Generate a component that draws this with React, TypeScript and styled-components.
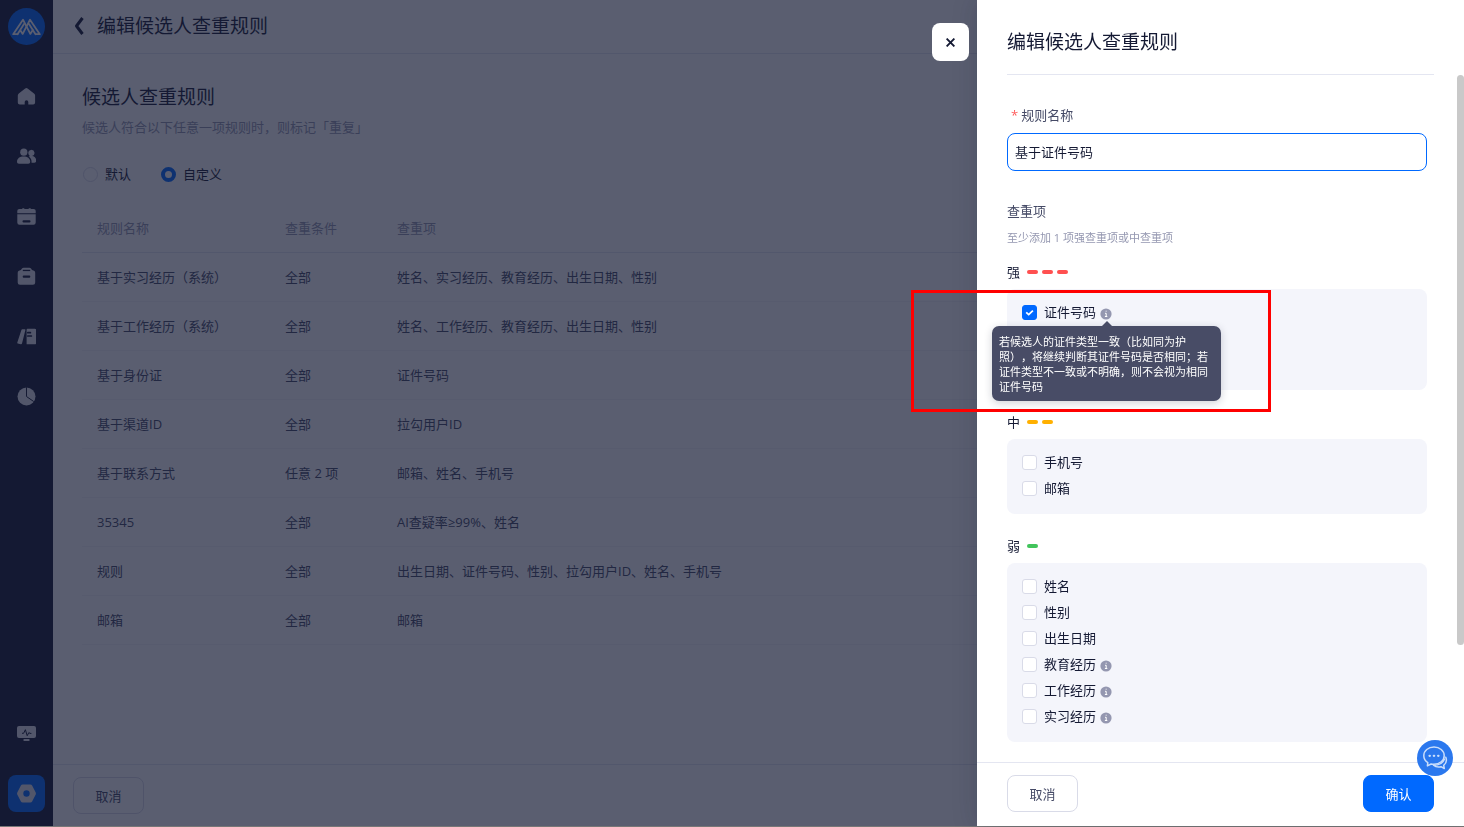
import React, { useState } from "react";
import styled, { createGlobalStyle, css } from "styled-components";

const color = {
  ink: "#141933",
  text: "#454a66",
  muted: "#9497b0",
  line: "#e4e6f1",
  border: "#d9dbe8",
  blue: "#0069ff",
  panel: "#f4f5fb",
  tip: "#484c66",
};

const GlobalStyle = createGlobalStyle`
  *, *::before, *::after { box-sizing: border-box; }
  body {
    margin: 0;
    overflow: hidden;
    font-family: "Open Sans", "Noto Sans CJK SC", sans-serif;
    font-size: 13px;
    line-height: 20px;
    color: ${color.ink};
    text-spacing-trim: space-all;
  }
  button, input { font: inherit; color: inherit; margin: 0; }
  button { cursor: pointer; }
  h1, h2, h3, p { margin: 0; font-weight: 400; }
`;

const Shell = styled.div`
  display: flex;
  height: 100vh;
  background: #fff;
  border-bottom: 1px solid #777;
`;

/* ---------- side navigation ---------- */

const Sidebar = styled.nav`
  display: flex;
  flex-direction: column;
  flex: none;
  width: 53px;
  padding: 8px 0 3px;
  background: ${color.ink};
`;

const Logo = styled.a`
  display: grid;
  place-items: center;
  width: 37px;
  height: 37px;
  margin: 0 auto 21px;
  border-radius: 50%;
  background: ${color.blue};
`;

const NavItem = styled.a`
  display: grid;
  place-items: center;
  height: 60px;
  color: #e4e5ec;
`;

const NavSpacer = styled.div`
  flex: 1;
`;

const NavActive = styled.span`
  display: grid;
  place-items: center;
  width: 37px;
  height: 37px;
  border-radius: 8px;
  background: ${color.blue};
`;

/* ---------- page ---------- */

const Main = styled.main`
  display: flex;
  flex: 1;
  flex-direction: column;
  min-width: 0;
`;

const PageHeader = styled.header`
  display: flex;
  align-items: center;
  gap: 10px;
  flex: none;
  height: 54px;
  padding: 0 20px 2px;
  border-bottom: 1px solid ${color.line};
`;

const BackButton = styled.button`
  display: grid;
  place-items: center;
  width: 14px;
  height: 24px;
  padding: 0;
  border: 0;
  background: none;
`;

const Title = styled.h1`
  font-size: 19px;
  line-height: 28px;
`;

const Content = styled.section`
  flex: 1;
  min-height: 0;
  overflow: hidden;
  padding: 29px 30px 0 29px;
`;

const SubTitle = styled.h2`
  font-size: 19px;
  line-height: 28px;
`;

const Hint = styled.p`
  margin-top: 6px;
  color: ${color.muted};
`;

const RadioGroup = styled.div`
  display: flex;
  gap: 30px;
  margin: 27px 0 21px;
  padding-left: 1px;
`;

const RadioLabel = styled.label`
  display: flex;
  align-items: center;
  gap: 7px;
`;

const Radio = styled.input.attrs({ type: "radio" })`
  appearance: none;
  width: 15px;
  height: 15px;
  border: 1px solid ${color.border};
  border-radius: 50%;
  background: #fff;
  &:checked {
    border: 4px solid ${color.blue};
  }
`;

const Table = styled.table`
  width: 100%;
  table-layout: fixed;
  border-collapse: separate;
  border-spacing: 0;
`;

const cell = css`
  padding: 0 0 1px 15px;
  text-align: left;
  font-weight: 400;
`;

const Th = styled.th<{ $w?: number }>`
  ${cell}
  width: ${(p) => (p.$w ? `${p.$w}px` : "auto")};
  height: 48px;
  color: ${color.muted};
  border-bottom: 1px solid ${color.line};
`;

const Td = styled.td`
  ${cell}
  height: 49px;
  color: ${color.text};
  border-bottom: 1px solid #f3f4f9;
`;

const PageFooter = styled.footer`
  flex: none;
  padding: 12px 20px;
  border-top: 1px solid ${color.line};
`;

const Button = styled.button<{ $primary?: boolean }>`
  width: 71px;
  height: 37px;
  padding: 0;
  border: 1px solid ${(p) => (p.$primary ? color.blue : color.border)};
  border-radius: 8px;
  background: ${(p) => (p.$primary ? color.blue : "#fff")};
  color: ${(p) => (p.$primary ? "#fff" : color.text)};
`;

/* ---------- drawer ---------- */

const Mask = styled.div`
  position: fixed;
  inset: 0 0 1px;
  background: rgba(20, 26, 51, 0.7);
`;

const Drawer = styled.aside`
  position: fixed;
  inset: 0 0 1px auto;
  display: flex;
  flex-direction: column;
  width: 487px;
  max-width: 100vw;
  background: #fff;
  box-shadow: 0 0 24px rgba(20, 25, 51, 0.2);
`;

const CloseButton = styled.button`
  position: absolute;
  top: 23px;
  left: -45px;
  display: grid;
  place-items: center;
  width: 37px;
  height: 38px;
  padding: 0;
  border: 0;
  border-radius: 8px;
  background: #fff;
`;

const DrawerHeader = styled.header`
  flex: none;
  margin: 0 30px;
  padding: 28px 0 18px;
  border-bottom: 1px solid ${color.line};
`;

const DrawerBody = styled.div`
  position: relative;
  flex: 1;
  min-height: 0;
  overflow: hidden;
  padding: 30px 37px 0 30px;
`;

const ScrollThumb = styled.div`
  position: absolute;
  top: 0;
  right: 0;
  width: 7px;
  height: 83%;
  border-radius: 4px;
  background: #c9c9c9;
`;

const FieldLabel = styled.label`
  display: flex;
  gap: 3px;
  padding-left: 4px;
  color: ${color.text};
`;

const Required = styled.span`
  color: #ff5c5c;
`;

const TextInput = styled.input`
  display: block;
  width: 100%;
  height: 38px;
  margin: 8px 0 30px;
  padding: 0 7px 2px;
  border: 1px solid ${color.blue};
  border-radius: 8px;
  outline: none;
`;

const GroupTitle = styled.h3`
  font-size: 13px;
  line-height: 20px;
  color: ${color.text};
`;

const GroupHint = styled.p`
  margin: 7px 0 14px;
  font-size: 11px;
  color: ${color.muted};
`;

const Level = styled.h3`
  display: flex;
  align-items: center;
  gap: 7px;
  margin-bottom: 7px;
  font-size: 13px;
  line-height: 20px;
`;

const Bars = styled.span`
  display: flex;
  gap: 4px;
`;

const Bar = styled.i<{ $color: string }>`
  width: 11px;
  height: 4px;
  border-radius: 2px;
  background: ${(p) => p.$color};
`;

const Panel = styled.div<{ $rows: number }>`
  min-height: ${(p) => p.$rows * 26 + 23}px;
  margin-bottom: 22px;
  padding: 10px 15px 13px;
  border-radius: 8px;
  background: ${color.panel};
`;

const Option = styled.div`
  display: flex;
  align-items: center;
  height: 26px;
`;

const OptionLabel = styled.label`
  position: relative;
  display: flex;
  align-items: center;
  gap: 7px;
`;

const Checkbox = styled.input.attrs({ type: "checkbox" })`
  appearance: none;
  width: 15px;
  height: 15px;
  border: 1px solid ${color.border};
  border-radius: 3px;
  background: #fff;
  &:checked {
    border-color: ${color.blue};
    background: ${color.blue};
  }
`;

const Tick = styled.svg`
  position: absolute;
  top: 3px;
  left: 0;
  pointer-events: none;
`;

const Info = styled.span`
  position: relative;
  display: block;
  height: 11px;
  margin: 3px 0 0 4px;
  svg {
    display: block;
  }
`;

const Tooltip = styled.div`
  position: absolute;
  z-index: 1;
  top: 18px;
  left: -108px;
  width: 229px;
  padding: 8px 7px 7px;
  border-radius: 7px;
  background: ${color.tip};
  box-shadow: 0 2px 8px rgba(20, 25, 51, 0.2);
  color: #fff;
  font-size: 11px;
  line-height: 15px;
  &::before {
    content: "";
    position: absolute;
    top: -5px;
    left: 110px;
    border: 5px solid transparent;
    border-top: 0;
    border-bottom-color: ${color.tip};
  }
`;

const DrawerFooter = styled.footer`
  display: flex;
  justify-content: space-between;
  flex: none;
  padding: 12px 30px 14px;
  border-top: 1px solid ${color.line};
`;

const ChatButton = styled.button`
  position: fixed;
  right: 11px;
  bottom: 51px;
  display: grid;
  place-items: center;
  width: 36px;
  height: 36px;
  padding: 0;
  border: 0;
  border-radius: 50%;
  background: #2b78ee;
`;

const Highlight = styled.div`
  position: fixed;
  top: 290px;
  right: 193px;
  width: 360px;
  height: 122px;
  border: 3px solid #f00;
  pointer-events: none;
`;

/* ---------- icons ---------- */

const dark = color.ink;

const Icon = ({ children }: { children: React.ReactNode }) => (
  <svg width="19" height="19" viewBox="0 0 19 19" fill="currentColor" aria-hidden="true">
    {children}
  </svg>
);

const HomeIcon = () => (
  <Icon>
    <path d="M8.2 1.4a2 2 0 0 1 2.4 0l6.4 5.2c.8.6 1.1 1.2 1.1 2v7a2 2 0 0 1-2 2h-4.800v-2.600a1.800 1.800 0 0 0-3.600 0v2.600H2.800a2 2 0 0 1-2-2v-7c0-.8.3-1.4 1-2z" />
  </Icon>
);

const PeopleIcon = () => (
  <Icon>
    <circle cx="6.8" cy="5.2" r="3.6" />
    <path d="M0 14.8c0-3.4 2.8-5.3 6.6-5.3s6.6 1.9 6.6 5.3c0 1.3-.7 1.9-2 1.9H2c-1.300 0-2-.6-2-1.900z" />
    <path d="M11.300 6a3.100 3.100 0 1 1 3.800 3c2.600.3 4.100 2.200 4.100 4.500 0 1.500-.7 2.200-2 2.200h-2.700c.3-2.700-.7-4.700-2.900-6.100 1-.1 1.100-.7.900-1-.8-.7-1.200-1.500-1.200-2.600z" />
  </Icon>
);

const CalendarIcon = () => (
  <Icon>
    <path d="M.3 4.600A2.200 2.200 0 0 1 2.500 2.100h2.800V1.200h2v.9h4.400v-.9h2v.9h2.800a2.200 2.200 0 0 1 2.200 2.500v1.600H.3z" />
    <path d="M.3 7.200h18.400v8.300a2.200 2.200 0 0 1-2.200 2.200h-14A2.200 2.200 0 0 1 .3 15.500z" />
    <rect x="5.500" y="13.200" width="8" height="2.200" rx="1" fill={dark} />
  </Icon>
);

const BagIcon = () => (
  <Icon>
    <path d="M5 1.600C5.400 1 6 .8 6.700.8h5.600c.7 0 1.300.2 1.700.8l1 1.400 2 .8c.8.4 1.200 1 1.200 1.900v9.700a2.300 2.300 0 0 1-2.300 2.300H3a2.300 2.300 0 0 1-2.300-2.300V5.700c0-.9.4-1.500 1.200-1.900l2-.8z" />
    <rect x="5.800" y="2.800" width="7.400" height="1.300" fill={dark} />
    <rect x="5.700" y="8.600" width="7.600" height="2.200" rx="1" fill={dark} />
  </Icon>
);

const BooksIcon = () => (
  <Icon>
    <path d="M5.300 2.200h2.500c.5 0 .7.300.6.800L5 16.500c-.2.600-.6.800-1.200.7L.8 16.500c-.5-.1-.7-.4-.5-1L4.400 3c.2-.5.400-.8.900-.8z" />
    <path d="M11 1.800h6.800c.9 0 1.400.5 1.400 1.400v12.600c0 .9-.5 1.400-1.400 1.400H9.600V3.200c0-.9.500-1.400 1.400-1.400z" />
    <path d="M10.800 5.700h2.600M10.800 9h3.600" stroke={dark} strokeWidth="1.700" strokeLinecap="round" />
  </Icon>
);

const PieIcon = () => (
  <Icon>
    <circle cx="9.500" cy="9.500" r="9" />
    <path d="M9.500.2v9.300l7.200 5" fill="none" stroke={dark} strokeWidth="1" />
  </Icon>
);

const MonitorIcon = () => (
  <Icon>
    <rect x="0" y="2" width="19" height="12" rx="2" />
    <rect x="6.300" y="15" width="6.400" height="2" rx="1" />
    <path d="M5 9.300h1.600l1.800-3.600 1.800 6 1.700-3.200 1 .9h1.500" fill="none" stroke={dark} strokeWidth="1" />
  </Icon>
);

const SettingsIcon = () => (
  <Icon>
    <path d="M5.700.5h7.600c.8 0 1.400.3 1.800 1l3.500 6.700c.4.8.4 1.800 0 2.600l-3.500 6.700c-.4.700-1 1-1.800 1H5.700c-.8 0-1.400-.3-1.800-1L.4 10.800a2.900 2.900 0 0 1 0-2.600l3.500-6.700c.4-.7 1-1 1.800-1z" />
    <circle cx="9.500" cy="9.500" r="3.200" fill={color.blue} />
  </Icon>
);

const LogoIcon = () => (
  <svg width="29" height="18" viewBox="0 0 29 18" fill="none" stroke="#fff" strokeWidth="1.800" strokeLinecap="round" strokeLinejoin="round" aria-hidden="true">
    <path d="M5.500 16.200H1.200L11 1.700l7.300 14.200L20.800 12" />
    <path d="M5.500 16.200 12 6M23.500 16.200h4.300L18 1.700l-7.300 14.200L8.500 12.500M23.500 16.200 17 6" />
  </svg>
);

const InfoIcon = () => (
  <svg width="12" height="12" viewBox="0 0 12 12" aria-hidden="true">
    <circle cx="6" cy="6" r="5.600" fill={color.muted} />
    <path d="M5 5.300h1.200v3M4.900 8.500h2.400M5.700 3.200h.9" fill="none" stroke="#fff" strokeWidth="1" />
  </svg>
);

const ChatIcon = () => (
  <svg width="26" height="26" viewBox="0 0 26 26" fill="none" stroke="#c9ddfb" strokeWidth="1.500" strokeLinecap="round" strokeLinejoin="round" aria-hidden="true">
    <path d="M12 2C6.300 2 1.800 5.800 1.800 10.700c0 2.900 1.500 5.300 4 6.900l-.4 3.300 3.700-1.900c1 .2 1.900.3 2.900.3 5.700 0 10.200-3.800 10.200-8.600S17.700 2 12 2z" />
    <path d="M23.800 12.200c1.200 3.200.4 6.200-2.100 8.100l.6 3.200-3.300-1.800c-2.800.6-5.600.1-7.500-1.500 5.500 0 9.600-2.500 10.900-6" />
    <path d="M7.500 10.800h.4M11.800 10.800h.4M16.100 10.800h.4" strokeWidth="2.200" />
  </svg>
);

/* ---------- data ---------- */

const rules = [
  ["基于实习经历（系统）", "全部", "姓名、实习经历、教育经历、出生日期、性别"],
  ["基于工作经历（系统）", "全部", "姓名、工作经历、教育经历、出生日期、性别"],
  ["基于身份证", "全部", "证件号码"],
  ["基于渠道ID", "全部", "拉勾用户ID"],
  ["基于联系方式", "任意 2 项", "邮箱、姓名、手机号"],
  ["35345", "全部", "AI查疑率≥99%、姓名"],
  ["规则", "全部", "出生日期、证件号码、性别、拉勾用户ID、姓名、手机号"],
  ["邮箱", "全部", "邮箱"],
];

const levels = [
  { name: "强", bars: 3, color: "#ff5050", rows: 3, items: ["证件号码"] },
  { name: "中", bars: 2, color: "#ffb000", rows: 2, items: ["手机号", "邮箱"] },
  {
    name: "弱",
    bars: 1,
    color: "#41c45b",
    rows: 6,
    items: ["姓名", "性别", "出生日期", "教育经历", "工作经历", "实习经历"],
  },
];

const withInfo = ["证件号码", "教育经历", "工作经历", "实习经历"];

const tips: Record<string, string> = {
  证件号码:
    "若候选人的证件类型一致（比如同为护照），将继续判断其证件号码是否相同；若证件类型不一致或不明确，则不会视为相同证件号码",
};

const navItems = [
  { label: "首页", icon: HomeIcon },
  { label: "候选人", icon: PeopleIcon },
  { label: "日程", icon: CalendarIcon },
  { label: "职位", icon: BagIcon },
  { label: "人才库", icon: BooksIcon },
  { label: "报表", icon: PieIcon },
];

export default function App() {
  const [mode, setMode] = useState("custom");
  const [name, setName] = useState("基于证件号码");
  const [checked, setChecked] = useState<string[]>(["证件号码"]);

  const toggle = (item: string) =>
    setChecked((list) => (list.includes(item) ? list.filter((i) => i !== item) : [...list, item]));

  return (
    <>
      <GlobalStyle />
      <Shell>
        <Sidebar>
          <Logo href="#" aria-label="Moka">
            <LogoIcon />
          </Logo>
          {navItems.map(({ label, icon: Glyph }) => (
            <NavItem key={label} href="#" aria-label={label}>
              <Glyph />
            </NavItem>
          ))}
          <NavSpacer />
          <NavItem href="#" aria-label="监控">
            <MonitorIcon />
          </NavItem>
          <NavItem href="#" aria-label="设置">
            <NavActive>
              <SettingsIcon />
            </NavActive>
          </NavItem>
        </Sidebar>

        <Main>
          <PageHeader>
            <BackButton aria-label="返回">
              <svg width="12" height="18" viewBox="0 0 12 18" fill="none" stroke={color.ink} strokeWidth="3" strokeLinejoin="round" aria-hidden="true">
                <path d="M8.500 1 2.500 9l6 8" />
              </svg>
            </BackButton>
            <Title>编辑候选人查重规则</Title>
          </PageHeader>

          <Content>
            <SubTitle>候选人查重规则</SubTitle>
            <Hint>候选人符合以下任意一项规则时，则标记「重复」</Hint>
            <RadioGroup>
              <RadioLabel>
                <Radio name="mode" checked={mode === "default"} onChange={() => setMode("default")} />
                默认
              </RadioLabel>
              <RadioLabel>
                <Radio name="mode" checked={mode === "custom"} onChange={() => setMode("custom")} />
                自定义
              </RadioLabel>
            </RadioGroup>
            <Table>
              <thead>
                <tr>
                  <Th $w={188}>规则名称</Th>
                  <Th $w={112}>查重条件</Th>
                  <Th>查重项</Th>
                </tr>
              </thead>
              <tbody>
                {rules.map((row) => (
                  <tr key={row[0]}>
                    {row.map((value, i) => (
                      <Td key={i}>{value}</Td>
                    ))}
                  </tr>
                ))}
              </tbody>
            </Table>
          </Content>

          <PageFooter>
            <Button type="button">取消</Button>
          </PageFooter>
        </Main>
      </Shell>

      <Mask />

      <Drawer role="dialog" aria-labelledby="drawer-title">
        <CloseButton aria-label="关闭">
          <svg width="9" height="9" viewBox="0 0 9 9" stroke={color.ink} strokeWidth="1.900" aria-hidden="true">
            <path d="m.6.6 7.800 7.800M8.400.6.6 8.400" />
          </svg>
        </CloseButton>
        <DrawerHeader>
          <Title as="h2" id="drawer-title">
            编辑候选人查重规则
          </Title>
        </DrawerHeader>
        <DrawerBody>
          <FieldLabel htmlFor="rule-name">
            <Required>*</Required>规则名称
          </FieldLabel>
          <TextInput id="rule-name" type="text" value={name} onChange={(e) => setName(e.target.value)} />
          <GroupTitle>查重项</GroupTitle>
          <GroupHint>至少添加 1 项强查重项或中查重项</GroupHint>
          {levels.map((level) => (
            <React.Fragment key={level.name}>
              <Level>
                {level.name}
                <Bars>
                  {Array.from({ length: level.bars }, (_, i) => (
                    <Bar key={i} $color={level.color} />
                  ))}
                </Bars>
              </Level>
              <Panel $rows={level.rows}>
                {level.items.map((item) => (
                  <Option key={item}>
                    <OptionLabel>
                      <Checkbox checked={checked.includes(item)} onChange={() => toggle(item)} />
                      {checked.includes(item) && (
                        <Tick width="15" height="15" viewBox="0 0 15 15" fill="none" stroke="#fff" strokeWidth="1.800" aria-hidden="true">
                          <path d="m4.200 7.300 2.500 2.300 4.200-4" />
                        </Tick>
                      )}
                      {item}
                    </OptionLabel>
                    {withInfo.includes(item) && (
                      <Info>
                        <InfoIcon />
                        {tips[item] && <Tooltip role="tooltip">{tips[item]}</Tooltip>}
                      </Info>
                    )}
                  </Option>
                ))}
              </Panel>
            </React.Fragment>
          ))}
          <ScrollThumb />
        </DrawerBody>
        <DrawerFooter>
          <Button type="button">取消</Button>
          <Button type="button" $primary>
            确认
          </Button>
        </DrawerFooter>
      </Drawer>

      <ChatButton aria-label="在线客服">
        <ChatIcon />
      </ChatButton>
      <Highlight />
    </>
  );
}
